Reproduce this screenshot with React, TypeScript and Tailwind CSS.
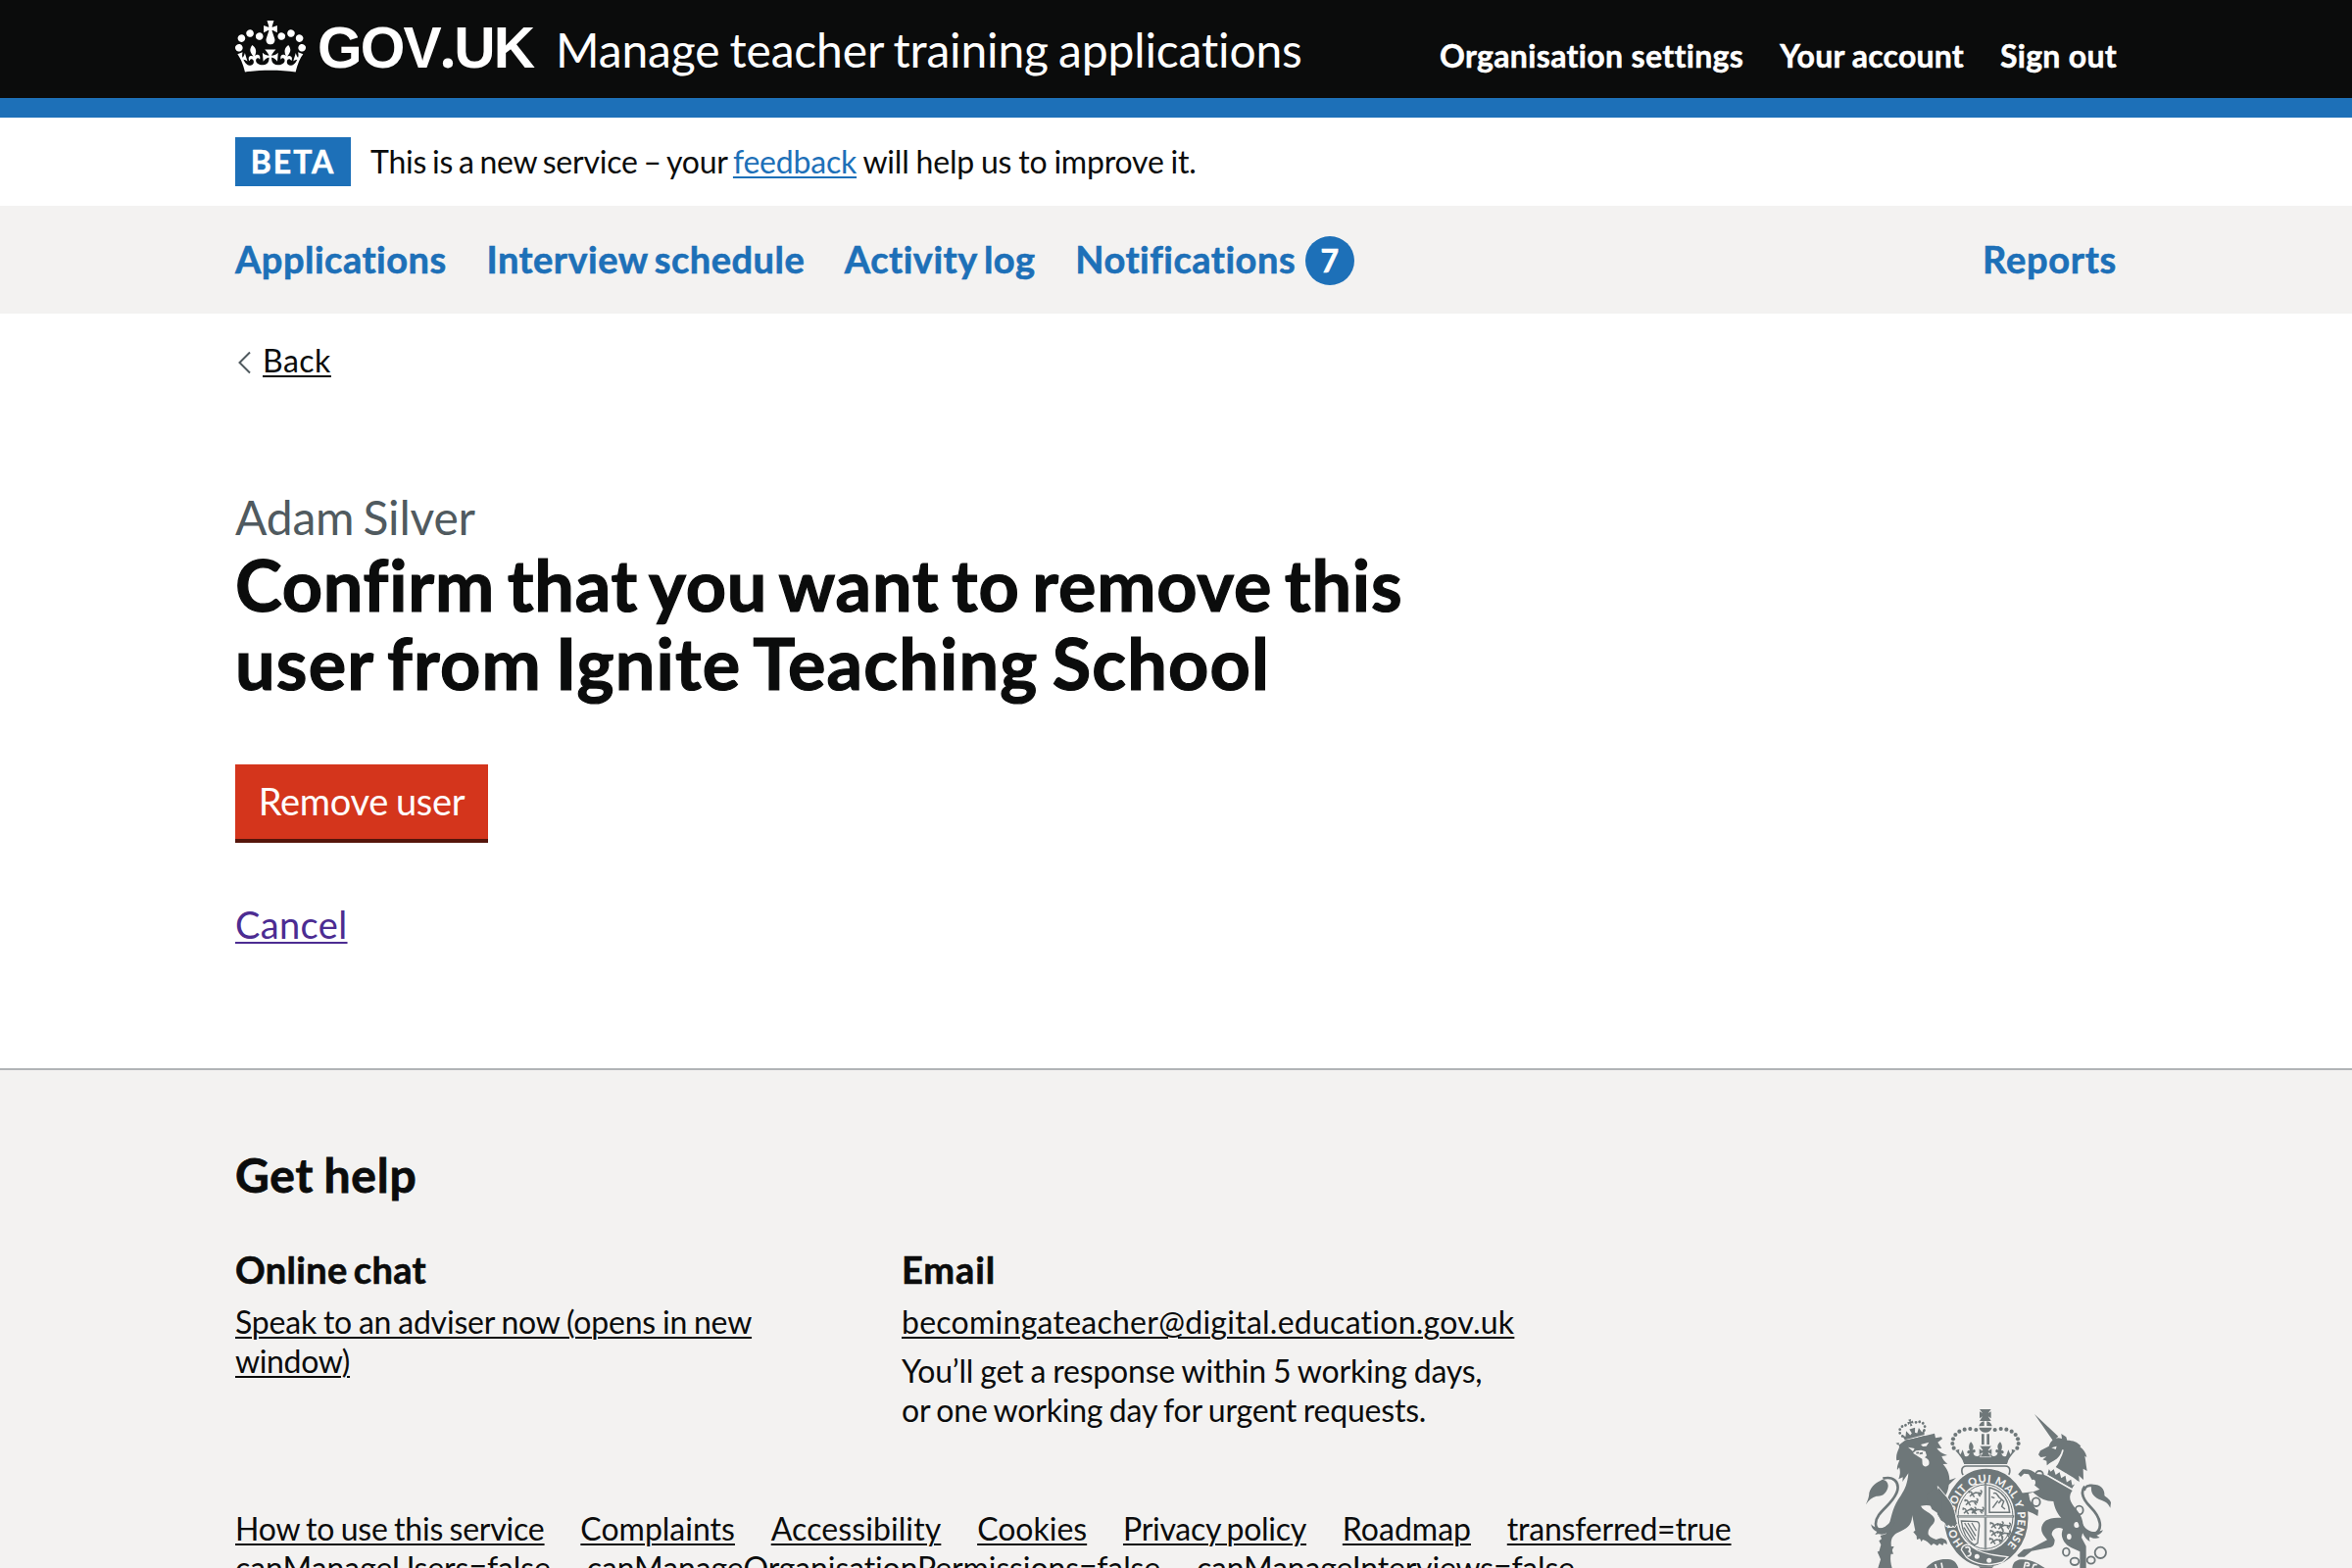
import type { ReactNode } from "react";

const INK = "#6e7779";
const PAPER = "#f3f2f1";

function Crown() {
  return (
    <svg viewBox="0 0 132 97" className="mt-1 h-[53px] w-[72px] shrink-0 self-start" fill="currentColor" aria-hidden="true">
      <path d="M25 30.2c3.5 1.5 7.7-.2 9.1-3.7 1.5-3.6-.2-7.8-3.9-9.2-3.6-1.4-7.6.3-9.1 3.9-1.4 3.5.3 7.5 3.9 9zM9 39.5c3.6 1.5 7.8-.2 9.2-3.7 1.5-3.6-.2-7.8-3.9-9.1-3.6-1.5-7.6.2-9.1 3.8-1.4 3.5.3 7.5 3.8 9zM4.4 57.2c3.5 1.5 7.7-.2 9.1-3.8 1.5-3.6-.2-7.7-3.9-9.1-3.5-1.5-7.6.3-9.1 3.8-1.4 3.5.3 7.6 3.9 9.1zm38.3-21.4c3.5 1.5 7.7-.2 9.1-3.8 1.5-3.6-.2-7.7-3.9-9.1-3.6-1.5-7.6.3-9.1 3.8-1.3 3.6.4 7.7 3.9 9.1zm64.4-5.6c-3.6 1.5-7.8-.2-9.1-3.7-1.5-3.6.2-7.8 3.8-9.2 3.6-1.4 7.7.3 9.2 3.9 1.3 3.5-.4 7.5-3.9 9zm15.9 9.3c-3.6 1.5-7.7-.2-9.1-3.7-1.5-3.6.2-7.8 3.7-9.1 3.6-1.5 7.7.2 9.2 3.8 1.5 3.5-.3 7.5-3.8 9zm4.7 17.7c-3.6 1.5-7.8-.2-9.2-3.8-1.5-3.6.2-7.7 3.9-9.1 3.6-1.5 7.7.3 9.2 3.8 1.3 3.5-.4 7.6-3.9 9.1zM89.3 35.8c-3.6 1.5-7.8-.2-9.2-3.8-1.4-3.6.2-7.7 3.9-9.1 3.6-1.5 7.7.3 9.2 3.8 1.4 3.6-.3 7.7-3.9 9.1zM69.7 17.7l8.9 4.7V9.3l-8.9 2.8c-.2-.3-.5-.6-.9-.9L72.4 0H59.6l3.5 11.2c-.3.3-.6.5-.9.9l-8.8-2.8v13.1l8.8-4.7c.3.3.6.7.9.9l-5 15.4v.1c-.2.8-.4 1.6-.4 2.4 0 4.1 3.1 7.5 7 8.1h.2c.3 0 .7.1 1 .1.4 0 .7 0 1-.1h.2c4-.6 7.1-4.1 7.1-8.1 0-.8-.1-1.7-.4-2.4V34l-5.1-15.4c.4-.2.7-.6 1-.9zM66 92.8c16.9 0 32.8 1.1 47.1 3.2 4-16.9 8.9-26.7 14-33.5l-9.6-3.4c1 4.9 1.1 7.2 0 10.2-1.5-1.4-3-4.3-4.2-8.7L108.6 76c2.8-2 5-3.2 7.5-3.3-4.4 9.4-10 11.9-13.6 11.2-4.3-.8-6.3-4.6-5.6-7.9 1-4.7 5.7-5.9 8-.5 4.3-8.7-3-11.4-7.6-8.8 7.1-7.2 7.9-13.5 2.1-21.1-8 6.1-8.1 12.3-4.5 20.8-4.7-5.4-12.1-2.5-9.5 6.2 3.4-5.2 7.9-2 7.2 3.1-.6 4.3-6.4 7.8-13.5 7.2-10.3-.9-10.9-8-11.2-13.8 2.5-.5 7.1 1.8 11 7.3L80.2 60c-4.1 4.4-8 5.3-12.3 5.4 1.4-4.4 8-11.6 8-11.6H55.5s6.4 7.2 7.9 11.6c-4.2-.1-8-1-12.3-5.4l1.4 16.4c3.9-5.5 8.5-7.7 10.9-7.3-.3 5.8-.9 12.8-11.1 13.8-7.2.6-12.9-2.9-13.5-7.2-.7-5 3.8-8.3 7.1-3.1 2.7-8.7-4.6-11.6-9.4-6.2 3.7-8.5 3.6-14.7-4.6-20.8-5.8 7.6-5 13.9 2.2 21.1-4.7-2.6-11.9.1-7.7 8.8 2.3-5.5 7.1-4.2 8.1.5.7 3.3-1.3 7.1-5.7 7.9-3.5.7-9-1.8-13.5-11.2 2.5.1 4.7 1.3 7.5 3.3l-4.7-15.4c-1.2 4.4-2.7 7.2-4.3 8.7-1.1-3-.9-5.3 0-10.2l-9.5 3.4c5 6.9 9.9 16.7 14 33.5 14.8-2.1 30.8-3.2 47.7-3.2z" />
    </svg>
  );
}

const archDots: [number, number][] = [
  [409, 117], [391, 114], [374, 116], [358, 122], [346, 132], [339, 145], [337, 159], [341, 173],
];

/* One half of the imperial crown, mirrored about x = 438. */
function CrownHalf() {
  return (
    <g>
      {archDots.map(([x, y]) => (
        <circle key={x + "-" + y} cx={x} cy={y} r="6.2" />
      ))}
      <path d="M393 154c9 9 10 16 5 25 5-4 10-2 9 4-1 5-4 5-6 2-1 8 4 13 13 13 6-1 8-8 5-13l19 16v21h-65c-6-18-14-26-27-42l12-4c-2 8 0 13 4 16l6-14 7 20c8 2 14-4 14-10-3 4-8 1-7-4 2-4 6-5 8-3-4-9-4-19 3-27z" />
    </g>
  );
}

function ShieldLion({ x, y }: { x: number; y: number }) {
  return (
    <g transform={"translate(" + x + " " + y + ")"} fill="none" stroke={INK} strokeWidth="4.5">
      <path d="M0 14c6-8 12-1 10 5l12-6 14 2c6-1 6-8 0-9M10 19l-6 6m8-6 6 8m12-10 6 8m-6-12 10 6M0 8l6 4" />
    </g>
  );
}

function RoyalArms() {
  return (
    <svg viewBox="0 0 900 540" className="h-[180px] w-[300px]" fill={INK} aria-hidden="true">
      {/* lion's crown */}
      <g transform="rotate(-15 214 118)">
        {[[180, 128], [175, 117], [178, 106], [187, 99], [198, 98], [231, 98], [242, 99], [251, 106], [254, 117], [249, 128]].map(([x, y]) => (
          <circle key={x} cx={x} cy={y} r="4.2" />
        ))}
        <path d="M210 84h9l-3 8 7-2v9l-7-3 2 9h-7l2-9-7 3v-9l7 2zM184 141l-5-18 10 9 6-16 9 15 6-4-4-14h18l-4 14 6 4 9-15 6 16 10-9-5 18zM184 144h62v5h-62z" />
      </g>
      {/* lion */}
      <path d="M172 164l22-16 20-3 68-17 3 14 18-3 3 6-14 10 12 19-15-1c6 10 16 16 32 22l-17 3c4 11 10 17 18 23l-14 1c12 14 20 28 20 49l20-7-22 21c-3 20-7 30-14 37 15 16 27 36 31 59l4 17-9 13-5-5-4 6-6-7-8 3-1-10-11-7 4-10-12-4 2-10-12-4 4-7c-16-8-30-10-49-6 5 10 14 14 21 19 23 14 26 24 16 37-11 12-16 19-14 31 6 9 13 12 24 16 9-2 14-7 23-2 9 4 11 8 10 17l-9-5-4 8-10-6-6 7-12-7-7 6c-9-8-14-15-26-18l-4 7-5-10-9 3-1-11-10-12 6-5c-4-17-6-33-10-47 2 30-16 42-44 54-16 8-24 22-18 50l5 15h-46l8-28-6-12 8-6-4-10 17-5 5-10c11-36 14-66 33-96 17-25 28-42 31-80l-18 26 1-14-13 6c5-15 6-24 2-36l-6 8c-2-11 3-20 7-31l-9 2c-3-15 2-26 8-40l-1-15-10 2z" />
      <path d="M118 474h40c-12 20-14 38-6 66h-43l8-26-10-24 13-2z" />
      <path d="M201 170l20 4-5 9zM240 162l25-7-8 12-11 1zM216 188l9-7 16-2 13 4 4 13-6 6c12 4 15 12 13 21-6 9-17 8-20-1l-1-16-12-7z" fill={PAPER} />
      <path d="M226 188l8-1m2 3 10-2" stroke={INK} strokeWidth="5" fill="none" />
      <path d="M72 346c4-12 9-18 10-36 6-23 24-32 40-41 14 2 22 14 16 29-7 17-17 23-34 22-13 4-24 12-32 26z" />
      <path d="M124 266c34-8 51 12 44 38-12 43-65 62-66 100-1 29 34 25 60-22" fill="none" stroke={INK} strokeWidth="8" />
      <path d="M88 406c8 10 20 14 40 10 12-3 20-12 28-22l4 8c-6 14-10 20-20 28-8 7-18 8-30 6l-10 2 6-9c-9-3-18-12-18-23z" />
      {/* cushion below the crown, then garter and shield */}
      <path d="M378 262c-16-8-18-34 2-34h118c20 0 18 26 2 34z" fill={PAPER} stroke={INK} strokeWidth="5" />
      <ellipse cx="440" cy="386" rx="131" ry="152" stroke={PAPER} strokeWidth="5" />
      <ellipse cx="438" cy="383" rx="90" ry="104" fill={PAPER} />
      <ellipse cx="438" cy="383" rx="84" ry="98" fill="none" stroke={INK} strokeWidth="3" />
      <path d="M438 280v204M350 382h176" stroke={INK} strokeWidth="7" />
      <path d="M438 284v198M354 382h168" stroke={PAPER} strokeWidth="1.5" />
      <ShieldLion x={386} y={296} />
      <ShieldLion x={374} y={322} />
      <ShieldLion x={368} y={348} />
      <ShieldLion x={392} y={348} />
      <ShieldLion x={452} y={392} />
      <ShieldLion x={452} y={416} />
      <ShieldLion x={450} y={440} />
      <ShieldLion x={474} y={396} />
      <ShieldLion x={474} y={420} />
      <path d="M450 294v76h62c-4-44-26-68-62-76zM462 312c8-6 12 4 18 12l14 12-6 16 10 8m-22-26-16 22m6-30-10-4m22 20 10-12" fill="none" stroke={INK} strokeWidth="4.5" />
      <path d="M364 396l48 2c8 2 8 12 6 22l-4 44-10 6c-22-14-36-36-40-74zM374 402l32 52m-22-52 24 40m-12-40 14 24M372 416l26 40" fill="none" stroke={INK} strokeWidth="4" />
      <path id="garter-line" d="M371 466A97 110 0 1 1 504 470" fill="none" />
      <text fill={PAPER} fontFamily="Lato, sans-serif" fontWeight="900" fontSize="33">
        <textPath href="#garter-line" textLength="500" lengthAdjust="spacing">HONI SOIT QUI MAL Y PENSE</textPath>
      </text>
      {/* buckle and strap */}
      <path d="M364 484c4-18 24-20 34-8l16 10c26 12 52 16 92 20l-16 16c-40 14-84 8-110-14z" stroke={PAPER} strokeWidth="4" />
      <path d="M376 478c14-8 18 8 10 12 10 0 10 14-4 14" fill="none" stroke={PAPER} strokeWidth="5" />
      <circle cx="412" cy="505" r="7.5" fill={PAPER} />
      <circle cx="449" cy="517" r="7.5" fill={PAPER} />
      <path d="M416 535h48l-6 5h-36z" />
      {/* lion's forepaw laid over the garter */}
      <path d="M292 290l22 26c16 18 30 38 34 72l4 16-8 12-6-5-5 6-6-7-10 3-4-10-12-8-12-20z" stroke={PAPER} strokeWidth="3" />
      <path d="M286 286l18 34v60l-30-20-18-40z" />
      {/* imperial crown */}
      <path d="M420 54h35l-9 12 9-5v21l-9-6 9 14h-35l9-14-9 6V61l9 5zM418 106c2-9 8-14 16-15v14zM442 91c9 1 14 6 16 15l-16-1zM418 110h40c-3 10-11 15-20 15s-17-5-20-15z" />
      <path d="M426 130h8v32h-8zM442 130h8v32h-8z" />
      <CrownHalf />
      <g transform="matrix(-1 0 0 1 876 0)">
        <CrownHalf />
      </g>
      <path d="M420 166h37l-10 14 11-6v20l-11-6 8 12h-34l8-12-11 6v-20l11 6z" stroke={PAPER} strokeWidth="2" />
      <path d="M368 206h140l-4 16H373z" />
      {/* unicorn */}
      <path d="M588 69l73 68-16 14z" />
      <path d="M600 193l6-12 26-14c5-14 14-24 30-25l10 2-2-15 15 10 3 10c18 0 33 6 42 18l-3 2c12 9 18 18 21 32l-6-4c3 15 4 29 7 46l-12-7 1 34-14-13 1 20-18-14-54-32c10-10 16-26 18-44-8 15-20 24-33 30l-12 9-1-14-12-4 12-9-18 2z" />
      <path d="M640 172l16-5-3 10z" fill={PAPER} />
      <path d="M632 224c32-11 38-24 43-46" fill="none" stroke={PAPER} strokeWidth="5" />
      <path d="M630 230l8 12 10-8 6 18 12-9 5 19 13-8 4 20 13-8 4 18 12-6-14 22-78-45z" stroke={PAPER} strokeWidth="4" />
      <path d="M632 228l-8 27 82 47 16-26" fill="none" stroke={PAPER} strokeWidth="6" />
      <path d="M625 258l79 45c-22 30 10 50 24 74 14 28 9 50 4 70l14 26v67h-19v-50c-16-8-38-14-48-30-8-14-10-22-4-40-18-8-34 2-34 18l9 16c-1 14-4 20-11 22l-60 12-22 18h-18l-4-5 20-18 22-3 50-26c-12-16-20-24-17-40 6-24 28-28 60-28-14-14-20-30-24-50-24 0-44-10-62-28l-14 4 4 20 18 28 8 2-2 19-16-9-18-7-2-10-14-22-8-8 2-14 42-4 20-8c-10-8-22-14-22-26l-12-20-14-2-10 10-8-8 14-15c20-2 30 4 42 14l22 2z" />
      <g fill="none" stroke={INK} strokeWidth="5.5">
        <ellipse cx="603" cy="253" rx="11" ry="10" />
        <ellipse cx="593" cy="338" rx="12" ry="13" fill={PAPER} />
        <ellipse cx="725" cy="363" rx="12" ry="13" />
        <ellipse cx="685" cy="491" rx="10" ry="12" />
        <ellipse cx="711" cy="520" rx="13" ry="11" />
        <ellipse cx="761" cy="516" rx="12" ry="11" />
        <circle cx="790" cy="493" r="17" />
      </g>
      <ellipse cx="584" cy="278" rx="7" ry="9" fill={PAPER} />
      <ellipse cx="717" cy="408" rx="8" ry="9" fill={PAPER} />
      <ellipse cx="694" cy="444" rx="7" ry="9" fill={PAPER} />
      <path d="M742 290c-18 22 2 48 18 64 30 30 42 70 8 84" fill="none" stroke={INK} strokeWidth="8" />
      <path d="M738 302c2-14 12-20 30-18 24 0 36 16 34 34 8 8 18 12 20 22l-2 16c-8-16-16-20-34-26-18-8-26-22-24-38-10-2-16 2-18 12z" />
      <path d="M728 378c4 28 14 44 34 50 14 2 24 0 36-4-5 10-12 14-20 16l10 7c-9 1-16 6-30-2-4 4-2 8 0 14-20-10-28-40-38-60z" />
      {/* motto scroll */}
      <path d="M256 540c20-24 50-30 74-26 14 4 20 12 25 26zM520 540c2-16 10-24 26-26 24-3 48 8 74 26z" />
      <path d="M284 528l4 12M303 524l3 16M556 540l4-16h8q6 3 2 9h-8M582 540l4-10h10" fill="none" stroke={PAPER} strokeWidth="5" />
    </svg>
  );
}

function Link({ children, className = "" }: { children: ReactNode; className?: string }) {
  return (
    <a href="#" className={"underline decoration-2 underline-offset-[3px] " + className}>
      {children}
    </a>
  );
}

export default function App() {
  return (
    <div className="flex h-[1600px] w-full flex-col overflow-hidden bg-white font-[Lato,sans-serif] text-[32px] leading-[40px] text-[#0b0c0c] [font-variant-ligatures:none]">
      <header className="h-[120px] shrink-0 border-b-[20px] border-[#1d70b8] bg-[#0b0c0c] text-white">
        <div className="mx-auto flex h-[100px] w-[1920px] items-baseline pt-[17px]">
          <Crown />
          <a href="#" className="ml-[12px] w-[243px] font-['Liberation_Sans',sans-serif] text-[58.7px] leading-[60px] font-bold tracking-[-1.9px]">
            GOV<span className="font-['Noto_Sans',sans-serif] leading-none">.</span>UK
          </a>
          <a href="#" className="text-[48px] leading-[60px] tracking-[-0.15px] [word-spacing:-2px]">Manage teacher training applications</a>
          <nav className="ml-auto flex gap-[37px] font-bold tracking-[0.2px] [-webkit-text-stroke:0.5px]">
            <a href="#" className="tracking-[0.35px]">Organisation settings</a>
            <a href="#">Your account</a>
            <a href="#" className="tracking-[0.3px]">Sign out</a>
          </nav>
        </div>
      </header>

      <div className="mx-auto flex h-[90px] w-[1920px] shrink-0 items-center">
        <strong className="flex h-[50px] w-[118px] items-center justify-center bg-[#1d70b8] tracking-[2px] text-white [-webkit-text-stroke:0.5px]">
          BETA
        </strong>
        <p className="ml-5 tracking-[-0.2px] [word-spacing:-1px]">
          <span className="[word-spacing:-2.2px]">This is a new service – your </span>
          <Link className="text-[#1d70b8]">feedback</Link> will help us to improve it.
        </p>
      </div>

      <div className="h-[110px] shrink-0 bg-[#f3f2f1]">
        <nav className="mx-auto flex h-full w-[1920px] items-center gap-[40.7px] pb-[2px] text-[38px] leading-[50px] font-bold tracking-[0.5px] text-[#1d70b8] [-webkit-text-stroke:0.6px]">
          <a href="#">Applications</a>
          <a href="#" className="[word-spacing:-3px]">Interview schedule</a>
          <a href="#" className="[word-spacing:-2.6px]">Activity log</a>
          <a href="#" className="flex items-center">
            Notifications
            <span className="mt-[4px] ml-[10px] flex h-[50px] w-[50px] items-center justify-center rounded-full bg-[#1d70b8] text-[32px] text-white">
              7
            </span>
          </a>
          <a href="#" className="ml-auto tracking-[0.73px]">Reports</a>
        </nav>
      </div>

      <main className="mx-auto flex h-[770px] w-[1920px] shrink-0 flex-col items-start pt-7">
        <a href="#" className="flex items-center">
          <svg viewBox="0 0 16 24" className="mt-1 mr-[10px] ml-[2px] h-[24px] w-[16px]" fill="none" stroke="#505a5f" strokeWidth="2">
            <path d="M13 1.500L2.500 12L13 22.500" />
          </svg>
          <span className="tracking-[0.5px] underline decoration-2 underline-offset-[3px]">Back</span>
        </a>
        <span className="mt-[110px] text-[48px] leading-[60px] tracking-[-0.2px] text-[#505a5f] [word-spacing:-3px]">Adam Silver</span>
        <h1 className="-mt-[2px] text-[72px] leading-[80px] font-bold [-webkit-text-stroke:1.2px]">
          <span className="block tracking-[0.8px] whitespace-nowrap [word-spacing:-5.6px]">Confirm that you want to remove this</span>
          <span className="block tracking-[1.2px] whitespace-nowrap [word-spacing:-4.6px]">user from Ignite Teaching School</span>
        </h1>
        <button className="mt-16 flex h-[76px] w-[258px] items-center justify-center bg-[#d4351c] pb-[2px] text-[38px] tracking-[-0.3px] text-white shadow-[0_4px_0_#55150b] [word-spacing:-1.5px]">
          Remove user
        </button>
        <Link className="mt-[62px] text-[38px] leading-[50px] tracking-[0.37px] text-[#4c2c92]">Cancel</Link>
      </main>

      <footer className="min-h-0 flex-1 border-t-2 border-[#b1b4b6] bg-[#f3f2f1]">
        <div className="mx-auto w-[1920px] pt-[77px]">
          <h2 className="text-[48px] leading-[60px] font-bold tracking-[0.8px] [-webkit-text-stroke:0.8px] [word-spacing:-2.2px]">Get help</h2>
          <div className="mt-[41px] flex h-[150px] gap-[60px]">
            <div className="w-[620px]">
              <h3 className="text-[38px] leading-[50px] font-bold tracking-[0.35px] [-webkit-text-stroke:0.6px] [word-spacing:-3.6px]">Online chat</h3>
              <p className="mt-[9px]">
                <Link className="tracking-[-0.2px] [word-spacing:-1.1px]">
                  Speak to an adviser now (opens in new
                  <br />
                  <span className="tracking-[-0.36px]">window)</span>
                </Link>
              </p>
            </div>
            <div className="w-[640px]">
              <h3 className="text-[38px] leading-[50px] font-bold tracking-[0.87px] [-webkit-text-stroke:0.6px]">Email</h3>
              <p className="mt-[9px]">
                <Link className="tracking-[0.26px]">becomingateacher@digital.education.gov.uk</Link>
              </p>
              <p className="mt-[10px] tracking-[-0.2px] whitespace-nowrap">
                <span className="[word-spacing:-0.9px]">You’ll get a response within 5 working days,</span>
                <br />
                <span className="[word-spacing:-1.4px]">or one working day for urgent requests.</span>
              </p>
            </div>
          </div>
          <div className="flex justify-between">
            <ul className="mt-[120px] flex w-[1600px] flex-wrap gap-x-[36.8px] whitespace-nowrap">
              <li><Link className="tracking-[-0.2px] [word-spacing:-1.6px]">How to use this service</Link></li>
              <li><Link>Complaints</Link></li>
              <li><Link className="tracking-[0.1px]">Accessibility</Link></li>
              <li><Link>Cookies</Link></li>
              <li><Link className="tracking-[-0.25px] [word-spacing:-2px]">Privacy policy</Link></li>
              <li><Link>Roadmap</Link></li>
              <li><Link className="tracking-[-0.2px]">transferred=true</Link></li>
              <li><Link className="tracking-[-0.06px]">canManageUsers=false</Link></li>
              <li><Link className="tracking-[-0.12px]">canManageOrganisationPermissions=false</Link></li>
              <li><Link className="tracking-[-0.18px]">canManageInterviews=false</Link></li>
            </ul>
            <div className="-mr-5">
              <RoyalArms />
            </div>
          </div>
        </div>
      </footer>
    </div>
  );
}
